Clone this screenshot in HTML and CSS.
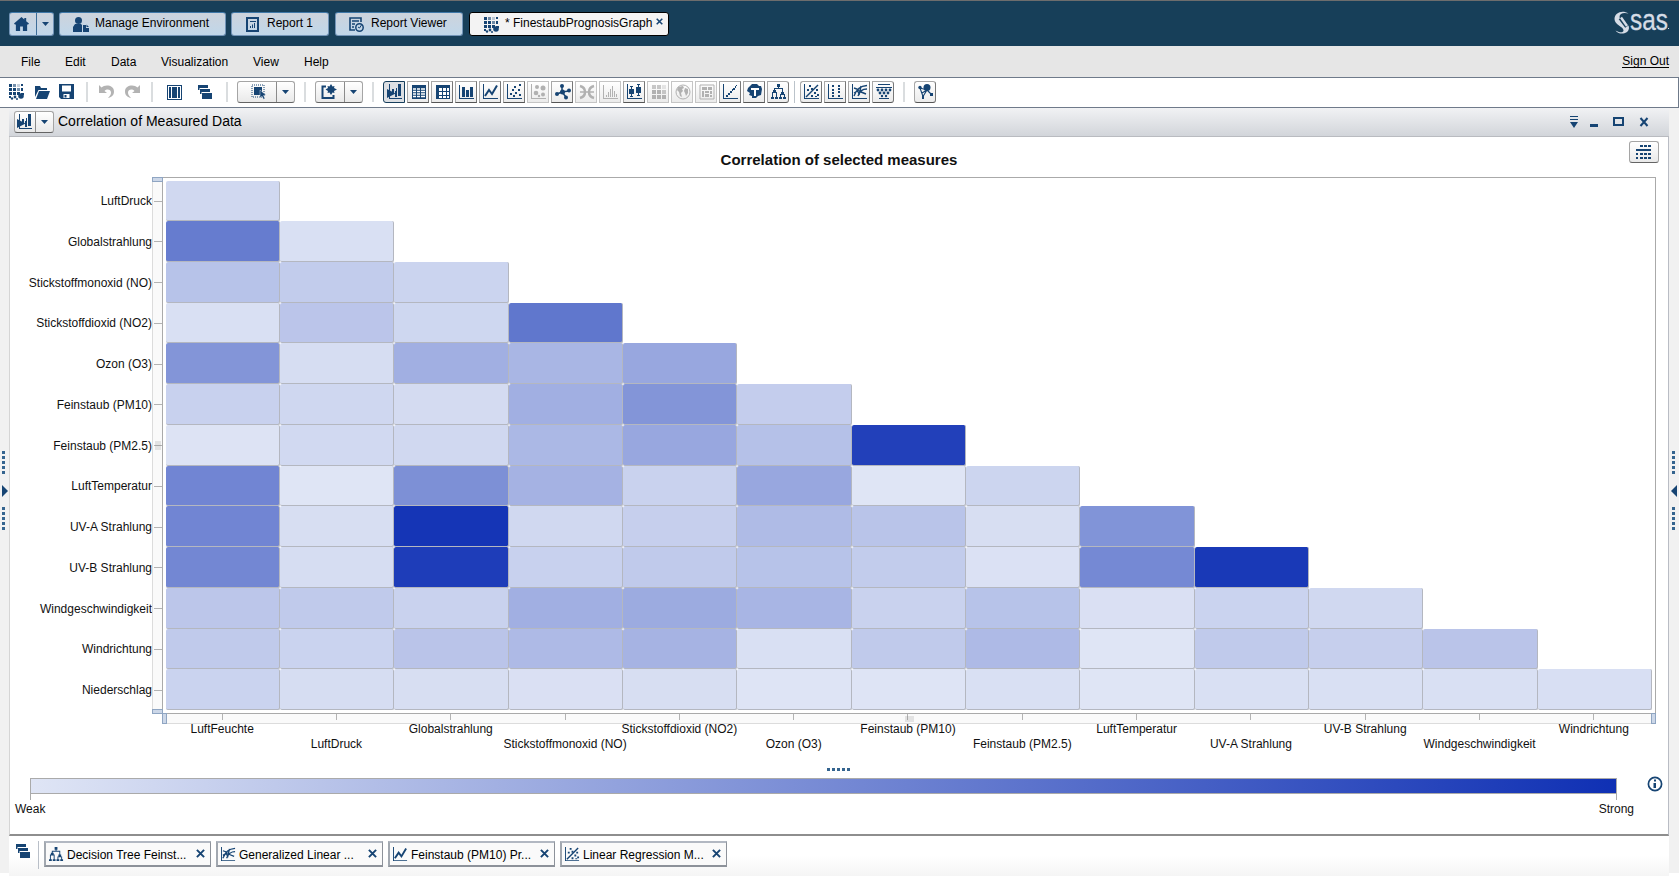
FILE: index.html
```html
<!DOCTYPE html>
<html lang="en">
<head>
<meta charset="utf-8">
<title>FinestaubPrognosisGraph</title>
<link rel="stylesheet" href="styles.css">
</head>
<body>
<svg class="sprite" aria-hidden="true">
  <symbol id="explore" viewBox="0 0 16 16"><path d="M0 0h3v3H0zM0 4h3v3H0zM4 4h3v3H4zM0 8h3v3H0zM4 8h3v3H4zM8 8h3v3H8zM12 4h2v3h-2zM12 9h3v2h-3zM0 12h2v2H0z"/><path d="M4 0h3v3H4zM8 4h3v3H8z" opacity=".6"/><path d="M8 0h3v3H8z" opacity=".25"/><path d="M12 0h2v2h-2z"/><circle cx="12" cy="12" r="2.8"/><circle cx="6" cy="13" r="1.4"/><circle cx="3" cy="14.500" r="1.200"/><circle cx="8" cy="15" r="1"/></symbol>
  <symbol id="home" viewBox="0 0 16 16"><path d="M8 0L0 7l1.200 1.300L2 7.700V15h4.500v-5h3v5H14V7.700l.8.6L16 7l-3-2.600V1h-2v1.600z"/></symbol>
  <symbol id="person" viewBox="0 0 16 16"><circle cx="5.500" cy="3.500" r="3.500"/><path d="M0 15V10l2-3h6l1 1v7zM10 8h3v3h3v4h-6zM13.500 7.500l2.500 2.500h-2.500z"/></symbol>
  <symbol id="report" viewBox="0 0 13 15"><path fill-rule="evenodd" d="M0 0h13v15H0zM2 2v11h9V2zM4 4h6v1H4zM4 9h1v2H4zM6 7.500h1V11H6zM8 6h1v5H8z"/></symbol>
  <symbol id="viewer" viewBox="0 0 15 15"><path d="M6 13H1V1h11v4M3 4h7M3 7h3M3 10h2" fill="none" stroke="currentColor" stroke-width="1.600"/><circle cx="10.500" cy="10.500" r="3.700" fill="none" stroke="currentColor" stroke-width="1.500"/><path d="M12.500 8l-2 3-1.500-1" fill="none" stroke="currentColor"/></symbol>
  <symbol id="open" viewBox="0 0 16 16"><path d="M1 13V2h5l1 2h6v2H4.500L1 13zM5 7h11l-3 8H2z"/></symbol>
  <symbol id="save" viewBox="0 0 16 16"><path fill-rule="evenodd" d="M0 0h15v15H2l-2-2zM3 1.500v6h9v-6zM4.500 10v4h6v-4zM5.500 11h2v2.500h-2z"/></symbol>
  <symbol id="undo" viewBox="0 0 16 16"><path d="M0 1l2.500 2.500C6 0 15 1 15 7.500c0 4-3 6-6 6.500 2-2 3-3.500 3-5.500 0-3-4-4-6.500-1.500L8 9H0z"/></symbol>
  <symbol id="columns" viewBox="0 0 15 15"><path fill-rule="evenodd" d="M0 0h15v15H0zM1 1v13h13V1z"/><path d="M2 2h2v11H2zM5 2h5v11H5zM11 2h2v11h-2z"/></symbol>
  <symbol id="cascade" viewBox="0 0 15 15"><path d="M0 0h10v3H1.500v2H0zM2 4h10v3H3.500v2H2zM4 8h10v6H4z"/></symbol>
  <symbol id="select" viewBox="0 0 16 16"><path d="M1 1h12v12H1z" fill="none" stroke="currentColor" stroke-dasharray="1 1"/><path d="M3 3h8v8H3z"/><path d="M9 6l6 5-2.500.5 1.500 3-1.500.8-1.500-3L9 14z" stroke="#fff" stroke-width=".4"/></symbol>
  <symbol id="newvis" viewBox="0 0 16 16"><path d="M5 2.500H1.500V14h11v-3" fill="none" stroke="currentColor" stroke-width="2"/><path d="M10 0l1.500 2.500 2-.5L13 4l3 1.500L13 7l.5 2-2-.5L10 11 8.500 8.500l-2 .5L7 7 4.500 5.500 7 4l-.5-2 2 .5z"/></symbol>
  <symbol id="autochart" viewBox="0 0 16 16"><path d="M2 0h1v14H2zM2 14h13v1H2zM5 5h2v4H5zM8 7h2v6H8zM11 0h3v12h-3zM9 4h1v5H9z"/><path d="M0 5l8.500 4.500L0 14z"/></symbol>
  <symbol id="table" viewBox="0 0 16 16"><path d="M1 1h14v14H1z"/><path d="M2 5h3M6 5h3M10 5h4M2 7.500h3M6 7.500h3M10 7.500h4M2 10h3M6 10h3M10 10h4M2 12.500h3M6 12.500h3M10 12.500h4" stroke="#fff" stroke-width="1.300"/></symbol>
  <symbol id="crosstab" viewBox="0 0 16 16"><path d="M1 1h14v14H1z"/><path d="M4 4h3v3H4zM8 4h3v3H8zM12 4h2v3h-2zM4 8h3v3H4zM8 8h3v3H8zM12 8h2v3h-2zM4 12h3v2H4zM8 12h3v2H8zM12 12h2v2h-2z" fill="#fff"/></symbol>
  <symbol id="bars" viewBox="0 0 16 16"><path d="M0 1h1v14H0zM1 14h14v1H1zM3 3h3v10H3zM7 6h3v7H7zM11 3h3v10h-3z"/></symbol>
  <symbol id="line" viewBox="0 0 16 16"><path d="M0 0h1v15H0zM0 14h15v1H0z"/><path d="M2 12l4-6 3 4 5-8.500" fill="none" stroke="currentColor" stroke-width="2"/></symbol>
  <symbol id="scatter" viewBox="0 0 16 16"><path d="M0 0h1v15H0zM0 14h15v1H0zM3 9h2v2H3zM5 5h2v2H5zM7 2h2v2H7zM12 0h2v2h-2zM8 8h2v2H8zM11 5h2v2h-2zM12 10h2v2h-2zM6 11h2v2H6z"/></symbol>
  <symbol id="bubble" viewBox="0 0 16 16"><path d="M0 0h1v15H0zM0 14h15v1H0z"/><circle cx="6" cy="3" r="2"/><circle cx="12" cy="4" r="2.500"/><circle cx="5" cy="9" r="2.300"/><circle cx="12" cy="10.500" r="2"/><circle cx="8" cy="12" r="1.200"/></symbol>
  <symbol id="network" viewBox="0 0 16 16"><path d="M7 2v6l7-1M7 8l-5 2M7 8l4 5" fill="none" stroke="currentColor" stroke-width="1.500"/><circle cx="7" cy="2" r="2"/><circle cx="14" cy="6.500" r="2"/><circle cx="2" cy="10" r="2"/><circle cx="11" cy="13.500" r="2"/><circle cx="7.500" cy="8" r="2.500"/></symbol>
  <symbol id="sankey" viewBox="0 0 16 16"><path d="M1 2c4 1 5 3 5 6s-1 5-5 6M15 2c-4 1-5 3-5 6s1 5 5 6" fill="none" stroke="currentColor" stroke-width="2.500"/><path d="M1 8h4M11 8h4M6 8h4" stroke="currentColor" stroke-width="1.500"/></symbol>
  <symbol id="histogram" viewBox="0 0 16 16"><path d="M0 1h1v14H0zM1 14h14v1H1zM3 11h1v2H3zM5 8h1v5H5zM7 5h1v8H7zM9 2h1v11H9zM11 7h1v6h-1zM13 10h1v3h-1z"/></symbol>
  <symbol id="box" viewBox="0 0 16 16"><path d="M0 0h1v15H0zM1 14h14v1H1zM2 5h5v5H2zM3 2h3v1H3zM4 2h1v10H4zM3 12h3v1H3zM9 3h5v6H9zM10 0h3v1h-3zM11 0h1v12h-1zM10 11h3v1h-3z"/></symbol>
  <symbol id="heat" viewBox="0 0 16 16"><path d="M1 6h4v4H1zM1 11h4v4H1zM6 6h4v4H6zM6 11h4v4H6zM11 11h4v4h-4z"/><path d="M1 1h4v4H1zM6 1h4v4H6zM11 6h4v4h-4z" opacity=".7"/><path d="M11 1h4v4h-4z" opacity=".3"/></symbol>
  <symbol id="globe" viewBox="0 0 16 16"><circle cx="8" cy="8" r="7" fill="none" stroke="currentColor"/><path d="M3 3l5-1 1 2-2 1 1 2-2 2 1 4-2-1-1-4-2-2zM10 4l3 1v4l-2 3-1-3-1-2z"/></symbol>
  <symbol id="treemap" viewBox="0 0 16 16"><path d="M1 1h14v14H1z" fill="none" stroke="currentColor"/><path d="M3 3h5v3H3zM9 3h4v3H9zM3 7h2v6H3zM6 7h4v2H6zM11 7h2v3h-2zM6 10h4v3H6zM11 11h2v2h-2z"/></symbol>
  <symbol id="trend" viewBox="0 0 16 16"><path d="M0 0h1v15H0zM0 14h15v1H0zM3 11h2v2H3zM5 9h2v2H5zM7 7h2v2H7zM9 5h1v2H9zM10 4h2v2h-2zM12 2h1v2h-1zM13 1h1v1h-1z"/></symbol>
  <symbol id="cloud" viewBox="0 0 16 16"><path d="M2 3l3-3h5l2 2h2l1 3-1 6-3 1-2 2H5v-2l-3-1 1-2-3-2 1-3z"/><path d="M4 4h8v2H9v6H7V6H4z" fill="#fff"/></symbol>
  <symbol id="tree" viewBox="0 0 16 16"><path d="M6 0h3v3H6zM7 3h1v2H7zM3 4h9v1H3zM3 4h1v4H3zM11 4h1v5h-1zM2 6h3v2H2zM1 8h5v1H1zM1 8h1v5H1zM5 8h1v5H5zM10 8h3v2h-3zM9 10h5v1H9zM9 10h1v3H9zM13 10h1v3h-1zM0 13h3v2H0zM4 13h3v2H4zM8 13h3v2H8zM12 13h3v2h-3z"/></symbol>
  <symbol id="regress" viewBox="0 0 16 16"><path d="M0 0h1v15H0zM0 14h15v1H0zM5 1h2v2H5zM3 5h2v2H3zM7 4h2v2H7zM12 5h2v2h-2zM10 8h2v2h-2zM13 10h2v2h-2zM7 11h2v2H7zM11 12h2v1h-2z"/><path d="M2 13L14 1" stroke="currentColor" stroke-width="1.500"/></symbol>
  <symbol id="logistic" viewBox="0 0 16 16"><path d="M0 0h1v15H0zM0 14h15v1H0zM4 1h2v2H4zM4 5h2v2H4zM4 8h2v2H4zM4 11h2v2H4zM10 1h2v2h-2zM10 4h2v2h-2zM10 7h2v2h-2zM10 11h2v2h-2z"/></symbol>
  <symbol id="glm" viewBox="0 0 16 16"><path d="M0 0h1v15H0zM0 14h15v1H0z"/><path d="M2 12C5 5 8 2 15 1.500M6 12C8 7 10 5 15 5M2 4l3 1 2 5M9 2L7 11M2 9l5-3M9 8l5 2" fill="none" stroke="currentColor" stroke-width="1.400"/></symbol>
  <symbol id="cluster" viewBox="0 0 16 16"><path d="M2 0h12v1H2zM0 3h16v1H0zM3 14h10v1H3z"/><g><circle cx="2" cy="6" r="1.400"/><circle cx="6" cy="6" r="1.400"/><circle cx="10" cy="6" r="1.400"/><circle cx="14" cy="6" r="1.400"/><circle cx="4" cy="9" r="1.400"/><circle cx="8" cy="9" r="1.400"/><circle cx="12" cy="9" r="1.400"/><circle cx="6" cy="12" r="1.200"/><circle cx="10" cy="12" r="1.200"/></g></symbol>
  <symbol id="compare" viewBox="0 0 16 16"><circle cx="9" cy="3.500" r="3.500"/><circle cx="2" cy="3.500" r="1.700"/><path d="M2 4l3 8.500L9 6l4.500 4.500M9 6L2 4M9 6l-5 3" fill="none" stroke="currentColor" stroke-width="1.100"/><path d="M4 11h2v4H4zM12 9h3v3h-3z"/></symbol>
  <symbol id="close" viewBox="0 0 10 10"><path d="M1 1l8 8M9 1L1 9" stroke="currentColor" stroke-width="2.200"/></symbol>
  <symbol id="down" viewBox="0 0 7 4"><path d="M0 0h7L3.500 4z"/></symbol>
</svg>

<header class="topbar">
  <div class="split home-split"><span class="split-main"><svg class="ic home-ic"><use href="#home"/></svg></span><span class="split-arrow"><svg class="down"><use href="#down"/></svg></span></div>
  <a class="apptab tab-env"><svg class="ic"><use href="#person"/></svg>Manage Environment</a>
  <a class="apptab tab-report"><svg class="ic report-ic"><use href="#report"/></svg>Report 1</a>
  <a class="apptab tab-viewer"><svg class="ic viewer-ic"><use href="#viewer"/></svg>Report Viewer</a>
  <a class="apptab tab-active"><svg class="ic"><use href="#explore"/></svg><span>* FinestaubPrognosisGraph</span><svg class="tab-close"><use href="#close"/></svg></a>
  <svg class="logo" viewBox="0 0 56 24"><path d="M14.500 2.500C8-1.500.5 2 .5 8c0 6 9 7.500 9 11.500 0 2-3 2.700-7 .5l-1-.5c2.500 4.500 13 4.500 13.500-2.500C15.500 11.500 5.500 10 5.500 6c0-3.500 4-5 9-3.500z"/><path d="M6.500 7L13 15.500" stroke="#173f59" stroke-width="4.500"/><path d="M7 6.500L13 15" stroke="#d5dce6" stroke-width="2.400"/><text x="16" y="18.500" textLength="38" lengthAdjust="spacingAndGlyphs">sas</text><path d="M54 17h1v1h-1z"/></svg>
</header>

<nav class="menubar">
  <a class="m-file">File</a><a class="m-edit">Edit</a><a class="m-data">Data</a><a class="m-vis">Visualization</a><a class="m-view">View</a><a class="m-help">Help</a>
  <a class="signout">Sign Out</a>
</nav>

<div class="toolbar">
  <div class="tools-file"><svg class="ic"><use href="#explore"/></svg><svg class="ic"><use href="#open"/></svg><svg class="ic"><use href="#save"/></svg></div>
  <i class="sep"></i>
  <div class="tools-undo"><svg class="ic"><use href="#undo"/></svg><svg class="ic flip"><use href="#undo"/></svg></div>
  <i class="sep"></i>
  <div class="tools-window"><svg class="ic15"><use href="#columns"/></svg><svg class="ic15"><use href="#cascade"/></svg></div>
  <i class="sep"></i>
  <div class="combo combo-select"><span class="combo-main"><svg class="ic"><use href="#select"/></svg></span><span class="combo-arrow"><svg class="down"><use href="#down"/></svg></span></div>
  <i class="sep"></i>
  <div class="combo combo-new"><span class="combo-main"><svg class="ic"><use href="#newvis"/></svg></span><span class="combo-arrow"><svg class="down"><use href="#down"/></svg></span></div>
  <i class="sep"></i>
  <div class="group charts">
    <span class="tb pressed"><svg class="ic"><use href="#autochart"/></svg></span>
    <span class="tb"><svg class="ic"><use href="#table"/></svg></span>
    <span class="tb"><svg class="ic"><use href="#crosstab"/></svg></span>
    <span class="tb"><svg class="ic"><use href="#bars"/></svg></span>
    <span class="tb"><svg class="ic"><use href="#line"/></svg></span>
    <span class="tb"><svg class="ic"><use href="#scatter"/></svg></span>
    <span class="tb off"><svg class="ic"><use href="#bubble"/></svg></span>
    <span class="tb"><svg class="ic"><use href="#network"/></svg></span>
    <span class="tb off"><svg class="ic"><use href="#sankey"/></svg></span>
    <span class="tb off"><svg class="ic"><use href="#histogram"/></svg></span>
    <span class="tb"><svg class="ic"><use href="#box"/></svg></span>
    <span class="tb off"><svg class="ic"><use href="#heat"/></svg></span>
    <span class="tb off"><svg class="ic"><use href="#globe"/></svg></span>
    <span class="tb off"><svg class="ic"><use href="#treemap"/></svg></span>
    <span class="tb"><svg class="ic"><use href="#trend"/></svg></span>
    <span class="tb"><svg class="ic"><use href="#cloud"/></svg></span>
    <span class="tb round-r"><svg class="ic"><use href="#tree"/></svg></span>
  </div>
  <i class="sep thin"></i>
  <div class="group">
    <span class="tb round-l"><svg class="ic"><use href="#regress"/></svg></span>
    <span class="tb"><svg class="ic"><use href="#logistic"/></svg></span>
    <span class="tb"><svg class="ic"><use href="#glm"/></svg></span>
    <span class="tb round-r"><svg class="ic"><use href="#cluster"/></svg></span>
  </div>
  <i class="sep last"></i>
  <span class="tb round-l round-r"><svg class="ic"><use href="#compare"/></svg></span>
</div>

<div class="workspace">
  <aside class="rail rail-left"><i class="dots"></i><i class="tri"></i><i class="dots"></i></aside>
  <div class="center">
    <section class="panel">
      <div class="panel-head">
        <div class="combo combo-type"><span class="combo-main"><svg class="ic"><use href="#autochart"/></svg></span><span class="combo-arrow"><svg class="down"><use href="#down"/></svg></span></div>
        <h1>Correlation of Measured Data</h1>
        <svg class="window-controls" viewBox="0 0 80 12"><path d="M0 0h8v1H0zM0 3h8v1H0zM0 6h8L4 12zM20 8h8v3h-8z"/><path d="M44 2h9v7h-9z" fill="none" stroke="currentColor" stroke-width="2"/><path d="M70.500 2l7 8M77.500 2l-7 8" stroke="currentColor" stroke-width="2"/></svg>
      </div>
      <div class="panel-body">
        <div class="chart-title">Correlation of selected measures</div>
        <span class="detail-btn"><svg viewBox="0 0 16 15" class="detail-ic"><path d="M4 0h3v2H4zM8 0h3v2H8zM12 0h3v2h-3zM0 4h15v2H0zM0 8h2v2H0zM4 8h3v2H4zM8 8h3v2H8zM12 8h3v2h-3zM0 12h2v2H0zM4 12h3v2H4zM8 12h3v2H8zM12 12h3v2h-3z"/></svg></span>
        <div class="chart">
          <div class="ylabels" id="ylabels"></div>
          <div class="yaxis" id="yaxis"></div>
          <div class="plot" id="plot"></div>
          <div class="xaxis" id="xaxis"></div>
          <div class="xlabels" id="xlabels"></div>
          <i class="handle h-top"></i><i class="handle h-bottom"></i><i class="handle h-left"></i><i class="handle h-right"></i>
          <i class="grip grip-y"></i><i class="grip grip-x"></i>
        </div>
        <div class="splitter"></div>
        <div class="legend">
          <div class="scale"><div class="ramp"></div><div class="scale-ticks"></div><div class="scale-labels"><span>Weak</span><span>Strong</span></div></div>
          <svg class="info" viewBox="0 0 16 16"><circle cx="8" cy="8" r="6.600" fill="none" stroke="currentColor" stroke-width="1.700"/><path d="M7 3.500h2v2H7zM6.500 7H9v5H6.500z"/></svg>
        </div>
      </div>
    </section>
    <footer class="taskbar">
      <svg class="ic15"><use href="#cascade"/></svg><i class="tasksep"></i>
      <div class="task"><svg class="ic15"><use href="#tree"/></svg><span>Decision Tree Feinst...</span><svg class="x"><use href="#close"/></svg></div>
      <div class="task"><svg class="ic15"><use href="#glm"/></svg><span>Generalized Linear ...</span><svg class="x"><use href="#close"/></svg></div>
      <div class="task"><svg class="ic15"><use href="#line"/></svg><span>Feinstaub (PM10) Pr...</span><svg class="x"><use href="#close"/></svg></div>
      <div class="task"><svg class="ic15"><use href="#regress"/></svg><span>Linear Regression M...</span><svg class="x"><use href="#close"/></svg></div>
    </footer>
  </div>
  <aside class="rail rail-right"><i class="dots"></i><i class="tri"></i><i class="dots"></i></aside>
</div>
<script src="chart.js"></script>
</body>
</html>
```

FILE: styles.css
```css
* { box-sizing: border-box; }
body { margin: 0; width: 1679px; height: 876px; overflow: hidden; background: #fff; color: #111; font: 12px/16px "Liberation Sans", Arial, sans-serif; }
.sprite { position: absolute; width: 0; height: 0; }
svg { display: block; fill: currentColor; color: #164473; flex: none; overflow: visible; }
.ic { width: 16px; height: 16px; }
.ic15 { width: 15px; height: 15px; }
.down { width: 7px; height: 4px; }
.flip { transform: scaleX(-1); }

.topbar { height: 46px; border-top: 1px solid #6d6d6d; background: #173f59; display: flex; align-items: flex-start; padding: 11px 0 0 9px; }
.split, .apptab { height: 24px; border: 1px solid #7395b8; border-top-color: #3f78a8; border-radius: 3px; background: linear-gradient(#cdd3dc, #c0d7ea); }
.split { display: flex; width: 45px; }
.split-main { width: 27px; border-right: 1px solid #3d6d98; display: flex; align-items: center; padding-left: 4px; }
.split-arrow { flex: 1; display: flex; align-items: center; justify-content: center; }
.home-ic { width: 15px; height: 15px; }
.apptab { display: flex; align-items: center; color: #000; white-space: nowrap; padding-bottom: 2px; }
.apptab .ic { margin-top: 3px; }
.tab-env { width: 167px; margin-left: 5px; padding-left: 13px; gap: 6px; }
.tab-report { width: 98px; margin-left: 5px; padding-left: 14px; gap: 8px; }
.report-ic { width: 13px; height: 15px; }
.tab-viewer { width: 128px; margin-left: 6px; padding-left: 13px; gap: 7px; }
.viewer-ic { width: 15px; height: 15px; }
.tab-active { width: 200px; margin-left: 6px; padding-left: 14px; gap: 5px; background: #f3f3f3; border-color: #000; }
.tab-close { width: 7px; height: 7px; margin: -3px 0 0 -1px; }
.logo { width: 56px; height: 24px; margin-left: auto; margin-right: 9px; margin-top: -1px; color: #d5dce6; }
.logo text { font: 29px "Liberation Sans", Arial, sans-serif; stroke: #d5dce6; stroke-width: .3px; }

.menubar { height: 31px; background: #e6e6e6; display: flex; padding: 8px 10px 0 21px; color: #000; }
.menubar a { flex: none; }
.m-file { width: 44px; } .m-edit { width: 46px; } .m-data { width: 50px; } .m-vis { width: 92px; } .m-view { width: 51px; }
.signout { margin-left: auto; height: 14px; border-bottom: 1px solid #000; line-height: 15px; }

.toolbar { height: 31px; border: 1px solid #6f7a8a; border-left: 0; background: #fff; display: flex; align-items: center; padding: 0 0 1px 9px; }
.tools-file { display: flex; gap: 9px; width: 77px; }
.tools-undo { display: flex; gap: 9px; padding-left: 11px; width: 63px; }
.tools-undo .ic { color: #b3b3b3; }
.tools-window { display: flex; gap: 16px; padding-left: 14px; width: 73px; align-items: center; }
.sep { width: 2px; height: 20px; background: #dadddf; flex: none; }
.sep.thin { width: 1px; height: 22px; margin: 0 5px; background: #bbc3ca; }
.sep.last { margin: 0 9px; }
.combo { display: flex; height: 22px; border: 1px solid #a5a5a5; border-bottom-color: #646464; border-radius: 3px; background: linear-gradient(#fff, #e9e9e9); flex: none; }
.combo-main { display: flex; align-items: center; justify-content: center; border-right: 1px solid #8b8b8b; flex: 1; }
.combo-arrow { width: 17px; display: flex; align-items: center; justify-content: center; }
.combo-select { width: 58px; margin: 0 9px; }
.combo-select .ic { margin-left: 4px; }
.combo-new { width: 48px; margin: 0 9px; }
.combo-new .ic { margin-right: 2px; }
.group { display: flex; gap: 2px; }
.charts { margin-left: 9px; }
.tb { width: 22px; height: 22px; flex: none; border: 1px solid #a8a8a8; border-right-color: #777; border-bottom-color: #555; background: linear-gradient(#fff, #ebebeb); display: flex; align-items: center; justify-content: center; }
.tb .ic { margin: 0 0 0 1px; }
.pressed { border: 1px solid #163e5c; border-radius: 3px 0 0 3px; background: #dcdfe3; }
.off { border-color: #c5c5c5; }
.off svg { color: #b1b1b1; }
.round-l { border-top-left-radius: 3px; border-bottom-left-radius: 3px; }
.round-r { border-top-right-radius: 3px; border-bottom-right-radius: 3px; }

.workspace { display: grid; grid-template-columns: 9px 1660px 10px; height: 768px; }
.rail { height: 765px; background: #f1f1f1; display: flex; flex-direction: column; padding-top: 343px; }
.rail-left { padding-left: 2px; }
.rail-right { padding-left: 3px; }
.dots { width: 3px; height: 23px; background: repeating-linear-gradient(#34648f 0 3px, transparent 3px 5px); }
.tri { width: 6px; height: 12px; margin: 11px 0 10px; background: #164473; clip-path: polygon(0 0, 100% 50%, 0 100%); }
.rail-right .tri { margin-left: -1px; clip-path: polygon(100% 0, 0 50%, 100% 100%); }

.panel { height: 728px; border: 1px solid #d5d5d5; border-top: 0; border-right: 1px solid #b9bcc4; border-bottom: 2px solid #8e8e8e; background: #fff; }
.panel-head { height: 29px; margin: 0 -1px; border-bottom: 1px solid #b9bbc0; background: linear-gradient(#f1f2f4, #d2d5da); display: flex; padding: 3px 19px 0 5px; }
.combo-type { width: 40px; height: 22px; margin-right: 4px; }
h1 { margin: 2px 0 0; font-size: 14px; line-height: 17px; font-weight: normal; color: #000; }
.window-controls { width: 80px; height: 12px; margin: 5px 0 0 auto; }
.panel-body { position: relative; }
.chart-title { height: 40px; padding: 14px 0 0; text-align: center; font-size: 15px; line-height: 18px; font-weight: bold; }
.detail-btn { position: absolute; right: 9px; top: 4px; width: 30px; height: 22px; border: 1px solid #a5a5a5; border-bottom-color: #646464; border-radius: 3px; background: linear-gradient(#fff, #e9e9e9); display: flex; align-items: center; justify-content: center; }
.detail-ic { width: 16px; height: 15px; }

.chart { position: relative; display: grid; grid-template-columns: 142px 10px 1494px; grid-template-rows: 537px 10px 32px; }
.ylabels, .yaxis { display: grid; grid-template-rows: repeat(13, 1fr); padding: 3.900px 0 3.600px; }
.ylabels span { display: flex; align-items: center; justify-content: flex-end; white-space: nowrap; }
.yaxis { border-left: 1px solid #dcdcdc; background: #fafafa; }
.yaxis i { align-self: center; justify-self: end; width: 8px; height: 1px; background: #b3b3b3; }
.plot { border: 1px solid #aaa; padding: 2.500px 3px 3px 2.500px; display: grid; grid-template: repeat(13, 1fr) / repeat(13, 1fr); }
.cell { border-right: 1px solid #b4b7c0; border-bottom: 1px solid #b4b7c0; border-radius: 2px; }
.xaxis { grid-column: 3; display: grid; grid-template-columns: repeat(13, 1fr); padding: 0 5px 0 3px; background: #fafafa; border-bottom: 1px solid #dcdcdc; }
.xaxis i { justify-self: center; width: 1px; height: 6px; background: #b3b3b3; }
.xlabels { grid-column: 3; display: grid; grid-template-columns: repeat(13, minmax(0, 1fr)); padding: 0 5px 0 3px; margin-top: -1px; }
.xlabels span { display: flex; justify-content: center; white-space: nowrap; line-height: 13px; }
.xlabels span:nth-child(even) { padding-top: 15px; }
.handle { position: absolute; border: 1px solid #8fa5c2; background: #ccd7e8; }
.h-top { left: 142px; top: 0; width: 11px; height: 5px; }
.h-bottom { left: 142px; top: 532px; width: 11px; height: 5px; }
.h-left { left: 152px; top: 536px; width: 5px; height: 11px; }
.h-right { left: 1641px; top: 536px; width: 5px; height: 11px; }
.grip { position: absolute; background: rgba(120, 120, 120, .18); }
.grip-y { left: 145px; top: 264px; width: 6px; height: 9px; }
.grip-x { left: 895px; top: 539px; width: 9px; height: 6px; }
.splitter { width: 23px; height: 3px; margin: 12px auto 0; background: repeating-linear-gradient(90deg, #34648f 0 3px, transparent 3px 5px); transform: translateX(-1px); }
.legend { display: flex; padding: 7px 5px 0 20px; align-items: flex-start; }
.scale { width: 1587px; }
.ramp { height: 16px; border: 1px solid #aaa; background: linear-gradient(90deg, #dfe5f5, #0f30b4); }
.scale-ticks { height: 6px; border: solid #aaa; border-width: 0 1px; }
.scale-labels { display: flex; justify-content: space-between; margin: 1px -17px 0 -15px; }
.info { width: 16px; height: 16px; margin: -2px 0 0 auto; }

.taskbar { height: 40px; display: flex; align-items: flex-start; padding: 5px 0 0 7px; background: linear-gradient(#fff 50%, #f5f5f5); }
.taskbar > .ic15 { margin-top: 3px; }
.tasksep { width: 1px; height: 28px; margin: 0 5px 0 7px; background: #b9bfc8; }
.task { width: 167px; height: 26px; margin-right: 5px; border: 1px solid #8d929a; border-top: 2px solid #b2b8c2; border-left: 2px solid #a2a8b0; border-bottom: 2px solid #8d929a; background: #fafafa; display: flex; align-items: center; padding: 1px 5px 0 3px; color: #000; }
.task span { flex: 1; margin-left: 3px; white-space: nowrap; }
.task .x { width: 9px; height: 9px; margin-top: -3px; }
```

FILE: chart.js
```js
const rows = ["LuftDruck", "Globalstrahlung", "Stickstoffmonoxid (NO)", "Stickstoffdioxid (NO2)", "Ozon (O3)",
  "Feinstaub (PM10)", "Feinstaub (PM2.5)", "LuftTemperatur", "UV-A Strahlung", "UV-B Strahlung",
  "Windgeschwindigkeit", "Windrichtung", "Niederschlag"];
const cols = ["LuftFeuchte", ...rows.slice(0, 12)];

// Correlation strength, 0 = weak, 1 = strong
const strength = [
  [.07],
  [.58, .03],
  [.19, .14, .095],
  [.03, .175, .08, .61],
  [.44, .045, .3, .26, .34],
  [.11, .075, .055, .3, .44, .13],
  [.01, .065, .07, .25, .34, .2, .91],
  [.53, 0, .47, .28, .105, .34, 0, .09],
  [.53, .04, .97, .07, .12, .23, .185, .04, .45],
  [.52, .045, .93, .11, .15, .19, .14, .02, .51, .95],
  [.17, .15, .105, .3, .32, .265, .105, .19, .025, .1, .07],
  [.15, .1, .18, .235, .275, .03, .15, .235, 0, .15, .12, .18],
  [.1, .045, .04, .025, .04, .005, .005, .03, 0, .03, .03, .03, .035]
];
const weak = [223, 229, 245];
const strong = [15, 48, 180];
const mix = t => `rgb(${weak.map((c, i) => Math.round(c + (strong[i] - c) * t)).join(",")})`;
const add = (parent, tag, text) => {
  const el = document.createElement(tag);
  if (text) el.textContent = text;
  document.getElementById(parent).append(el);
  return el;
};

rows.forEach(name => { add("ylabels", "span", name); add("yaxis", "i"); });
cols.forEach(name => { add("xlabels", "span", name); add("xaxis", "i"); });
strength.forEach((row, r) => row.forEach((t, c) => {
  const cell = add("plot", "div");
  cell.className = "cell";
  cell.style.gridArea = `${r + 1} / ${c + 1}`;
  cell.style.backgroundColor = mix(t);
}));
```
